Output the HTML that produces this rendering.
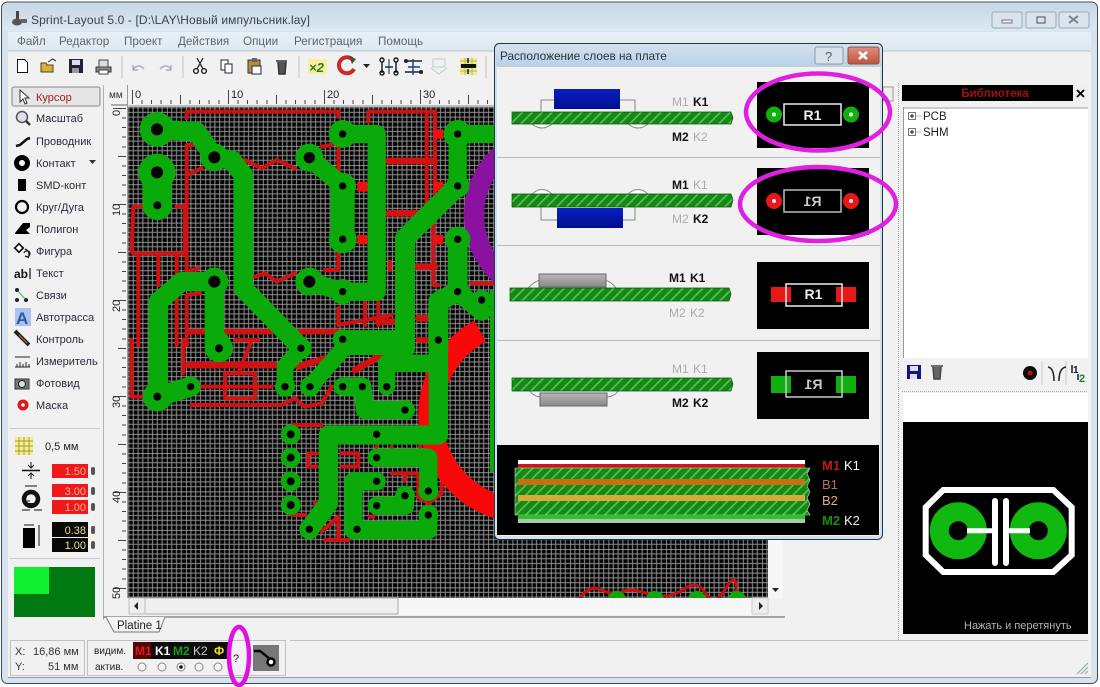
<!DOCTYPE html>
<html><head><meta charset="utf-8"><title>Sprint-Layout 5.0</title>
<style>
html,body{margin:0;padding:0;background:#fff;width:1100px;height:687px;overflow:hidden}
svg{display:block;filter:blur(.35px)}
text{font-family:"Liberation Sans","Noto Sans CJK SC",sans-serif;font-size:11px;fill:#222}
.m{fill:#5d6570;font-size:11.7px}
.t{font-size:11px;fill:#2a2a3a}
.rd{stroke:#d01212;fill:none;stroke-linecap:round;stroke-linejoin:round}
.gr{stroke:#0aaa0a;fill:none;stroke-linecap:round;stroke-linejoin:round}
.b{font-weight:bold;fill:#111;font-size:12px}
.g{fill:#aaa;font-size:12px}
</style></head><body>
<svg width="1100" height="687" viewBox="0 0 1100 687" xmlns="http://www.w3.org/2000/svg">
<defs>
<linearGradient id="tb" x1="0" y1="0" x2="0" y2="1"><stop offset="0" stop-color="#c9d7e4"/><stop offset="1" stop-color="#dce8f2"/></linearGradient>
<linearGradient id="mb" x1="0" y1="0" x2="0" y2="1"><stop offset="0" stop-color="#e8eff6"/><stop offset="1" stop-color="#dfe8f1"/></linearGradient>
<linearGradient id="dt" x1="0" y1="0" x2="0" y2="1"><stop offset="0" stop-color="#d2e1ee"/><stop offset="1" stop-color="#b9d0e4"/></linearGradient>
<linearGradient id="blue" x1="0" y1="0" x2="0" y2="1"><stop offset="0" stop-color="#0a20c0"/><stop offset="1" stop-color="#000e90"/></linearGradient>
<linearGradient id="grey" x1="0" y1="0" x2="0" y2="1"><stop offset="0" stop-color="#b8b8b8"/><stop offset="1" stop-color="#888"/></linearGradient>
<linearGradient id="cl" x1="0" y1="0" x2="0" y2="1"><stop offset="0" stop-color="#e09080"/><stop offset="1" stop-color="#c05040"/></linearGradient>
<pattern id="grid" x="128.5" y="107.5" width="19.2" height="19.2" patternUnits="userSpaceOnUse">
<rect width="19.2" height="19.2" fill="#050505"/>
<path d="M4.8 0V19.2M9.6 0V19.2M14.4 0V19.2M0 4.8H19.2M0 9.6H19.2M0 14.4H19.2" stroke="#8e8e8e" stroke-width="1"/>
<path d="M0 0V19.2M0 0H19.2" stroke="#b4b4b4" stroke-width="1.4"/>
</pattern>
<pattern id="hatch" width="7" height="7" patternUnits="userSpaceOnUse" patternTransform="rotate(-45) ">
<rect width="7" height="7" fill="#148a14"/><rect width="7" height="1.6" y="0" fill="#5cc05c"/>
</pattern>
<clipPath id="cv"><rect x="128" y="107" width="640" height="491"/></clipPath>
</defs>

<!-- window frame -->
<rect x="1.5" y="2" width="1096" height="681.5" rx="6" fill="#d6e3ef" stroke="#3a4a58"/>
<rect x="2.5" y="3" width="1094" height="28" rx="5" fill="url(#tb)"/>
<rect x="8" y="32" width="1083" height="19" fill="url(#mb)"/>
<rect x="8" y="51" width="1083" height="626" fill="#f1f1f1"/>
<path d="M8 51H1091" stroke="#b8c4ce"/>
<path d="M8 677.5H1091" stroke="#999"/>

<!-- title -->
<g fill="#444"><rect x="16" y="11" width="3" height="10"/><ellipse cx="17" cy="22" rx="5" ry="3.5" fill="#555"/><rect x="21" y="19" width="6" height="4" fill="#666"/></g>
<text x="31" y="24" font-size="12" style="font-size:12px;fill:#38424c" textLength="279">Sprint-Layout 5.0 - [D:\LAY\Новый импульсник.lay]</text>
<g fill="#d9e4ed" stroke="#9aa8b5"><rect x="992" y="12" width="30" height="16" rx="2"/><rect x="1026" y="12" width="30" height="16" rx="2"/><rect x="1059" y="12" width="30" height="16" rx="2"/></g>
<rect x="1002" y="20" width="10" height="3" fill="#eef" stroke="#778"/>
<rect x="1037" y="17" width="8" height="6" fill="none" stroke="#667" stroke-width="1.2"/>
<path d="M1069 16l9 7M1078 16l-9 7" stroke="#7a8792" stroke-width="2"/>

<!-- menu -->
<text class="m" x="17" y="45">Файл</text><text class="m" x="59" y="45">Редактор</text><text class="m" x="124" y="45">Проект</text><text class="m" x="178" y="45">Действия</text><text class="m" x="243" y="45">Опции</text><text class="m" x="294" y="45">Регистрация</text><text class="m" x="378" y="45">Помощь</text>

<!-- toolbar -->
<g>
<path d="M17.5 59.5h7l3 3v10h-10z" fill="#fff" stroke="#111"/>
<path d="M41 72v-9h5l1 2h6v7z" fill="#d8b040" stroke="#554010"/><path d="M48 62l5-3 3 2" stroke="#224" fill="none"/>
<rect x="69" y="59" width="14" height="14" fill="#223" /><rect x="72" y="60" width="8" height="5" fill="#dde"/><rect x="72" y="68" width="7" height="5" fill="#999"/>
<path d="M96 67h15v5H96z" fill="#888" stroke="#333"/><rect x="99" y="60" width="9" height="7" fill="#ddd" stroke="#444"/><rect x="99" y="70" width="9" height="4" fill="#fff" stroke="#444"/>
<path d="M122 56v22M183 56v22M299 56v22M486 56v22" stroke="#c4c4c4"/>
<path d="M133 69q6-6 11 0M133 65v5h5" stroke="#aab" fill="none" stroke-width="1.4"/>
<path d="M160 69q6-6 11 0M171 65v5h-5" stroke="#aab" fill="none" stroke-width="1.4"/>
<path d="M197 58l6 11M203 58l-6 11" stroke="#222" stroke-width="1.3"/><circle cx="196" cy="71" r="2.4" fill="none" stroke="#111" stroke-width="1.3"/><circle cx="204" cy="71" r="2.4" fill="none" stroke="#111" stroke-width="1.3"/>
<rect x="221" y="60" width="7" height="10" fill="#fff" stroke="#224"/><rect x="225" y="64" width="7" height="9" fill="#fff" stroke="#224"/>
<rect x="248" y="60" width="12" height="13" fill="#b09040" stroke="#333"/><rect x="252" y="66" width="9" height="8" fill="#fff" stroke="#223"/><rect x="252" y="58" width="5" height="4" fill="#666"/>
<path d="M276 61h11M278 62l1 12h6l1-12" fill="#555" stroke="#333" stroke-width="1.5"/>
<rect x="308" y="59" width="19" height="15" fill="#f4f0a0"/><text x="309" y="72" style="font-size:13px;font-weight:bold;font-style:italic;fill:#2c7a1c">×2</text>
<path d="M353 60a8 8 0 1 0 1 9" fill="none" stroke="#d02820" stroke-width="4"/><path d="M349 56l7 3-4 5z" fill="#4a4a30"/>
<path d="M363 64h7l-3.500 4z" fill="#222"/>
<g fill="none" stroke="#111" stroke-width="1.4"><path d="M382 62v11M396 62v11"/><circle cx="382" cy="60" r="2"/><circle cx="396" cy="60" r="2"/><circle cx="382" cy="73" r="2"/><circle cx="396" cy="73" r="2"/></g><path d="M385 67h8" stroke="#1a3a90" stroke-width="1.6"/><path d="M389 59v15" stroke="#222"/>
<path d="M405 61h17M405 72h17" stroke="#222" stroke-width="1.6"/><circle cx="406" cy="61" r="2" fill="#222"/><circle cx="421" cy="72" r="2" fill="#222"/><path d="M413 59v16M408 67h12" stroke="#1a3a90" stroke-width="1.4"/>
<g stroke="#bcc" fill="none"><rect x="433" y="59" width="12" height="8"/><path d="M431 68l8 6 8-6"/></g>
<rect x="460" y="58" width="17" height="17" fill="#f0ec90"/><path d="M460 66h17M460 61h17M460 71h17M465 58v17M472 58v17" stroke="#aaa050" stroke-width=".7"/><rect x="461" y="64" width="15" height="4" fill="#111"/><path d="M468 58v5M468 69v5" stroke="#123" stroke-width="1.6"/>
</g>

<!-- left tool panel -->
<path d="M103.5 85V620" stroke="#b0b0b0"/>
<rect x="12" y="87" width="88" height="19" rx="2" fill="#e6e6e6" stroke="#888"/>
<path d="M20 90v12l3-3 2 5 2-1-2-5h4z" fill="#fff" stroke="#333"/>
<text x="36" y="101" style="fill:#9b1c1c">Курсор</text>
<text class="t" x="36" y="122">Масштаб</text><text class="t" x="36" y="145">Проводник</text><text class="t" x="36" y="167">Контакт</text><text class="t" x="36" y="189">SMD-конт</text><text class="t" x="36" y="211">Круг/Дуга</text><text class="t" x="36" y="233">Полигон</text><text class="t" x="36" y="255">Фигура</text><text class="t" x="36" y="277">Текст</text><text class="t" x="36" y="299">Связи</text><text class="t" x="36" y="321">Автотрасса</text><text class="t" x="36" y="343">Контроль</text><text class="t" x="36" y="365">Измеритель</text><text class="t" x="36" y="387">Фотовид</text><text class="t" x="36" y="409">Маска</text>
<circle cx="22" cy="117" r="5.500" fill="#dde" stroke="#555" stroke-width="1.500"/><path d="M26 121l4 4" stroke="#333" stroke-width="2.500"/>
<path d="M16 146l4-1 7-6 3-1" stroke="#111" stroke-width="2.600" fill="none"/>
<path d="M89 160h7l-3.500 4z" fill="#333"/>
<circle cx="22" cy="163" r="5.500" fill="#fff" stroke="#000" stroke-width="5"/>
<rect x="18" y="179" width="8" height="12" fill="#000"/>
<circle cx="22" cy="207" r="6" fill="none" stroke="#000" stroke-width="2.200"/>
<path d="M15 233l8-10h7v4l-4 3 4 4h-15z" fill="#000"/>
<rect x="16" y="245" width="6" height="6" fill="#fff" stroke="#000" stroke-width="1.600" transform="rotate(45 19 248)"/><path d="M25 256a3 3 0 1 0-1-3M28 258a6 6 0 0 0-3-9" fill="none" stroke="#222" stroke-width="1.300"/>
<text x="14" y="278" style="font-weight:bold;font-size:12px;fill:#111">ab</text><path d="M30 268v11" stroke="#111" stroke-width="1.200"/>
<circle cx="17" cy="290" r="2" fill="#222"/><circle cx="17" cy="300" r="2" fill="#222"/><circle cx="26" cy="300" r="2" fill="#222"/><path d="M18 291l7 8" stroke="#50b060"/>
<rect x="15" y="308" width="16" height="18" fill="#a8c4e8"/><text x="16" y="324" style="font-size:17px;font-weight:bold;fill:#2a58a8">A</text>
<path d="M15 331l14 14" stroke="#222" stroke-width="4"/><path d="M19 335l8 8" stroke="#a85030" stroke-width="1.500"/>
<path d="M15 357h15M15 367h15M17 364v3M20 362v5M23 364v3M26 362v5M29 364v3" stroke="#222"/>
<rect x="15" y="379" width="14" height="10" fill="#777" stroke="#333"/><circle cx="22" cy="384" r="3.500" fill="#ddd" stroke="#222"/>
<circle cx="23" cy="405" r="5.500" fill="#e01818"/><circle cx="23" cy="405" r="1.800" fill="#fff"/>
<path d="M10 428.500H100M10 558.500H100" stroke="#c8c8c8"/>
<rect x="15" y="437" width="18" height="18" fill="#f2ee90"/><path d="M15 441h18M15 446h18M15 451h18M19 437v18M24 437v18M29 437v18" stroke="#a09a30" stroke-width=".9"/>
<text x="45" y="450">0,5 мм</text>
<path d="M22 470.500h18" stroke="#111" stroke-width="1.500"/><path d="M31 462v6M31 473v6M28 465l3 3 3-3M28 476l3-3 3 3" stroke="#111" fill="none"/>
<path d="M25 486h12M27 501h3M35 501h3M22 510h8M34 510h8" stroke="#111"/>
<circle cx="31" cy="499" r="7" fill="none" stroke="#111" stroke-width="4.500"/><rect x="28" y="503" width="6" height="4" fill="#111"/>
<rect x="23" y="528" width="12" height="20" fill="#000"/><path d="M24 525h10M39 525v21" stroke="#111"/>
<g font-size="11"><rect x="52" y="464" width="36" height="14" fill="#f01818"/><rect x="52" y="484" width="36" height="13" fill="#f01818"/><rect x="52" y="500" width="36" height="14" fill="#f01818"/><rect x="52" y="522" width="36" height="15" fill="#080808"/><rect x="52" y="538" width="36" height="14" fill="#080808"/></g>
<text x="86" y="475" text-anchor="end" style="fill:#ffb0a0">1.50</text><text x="86" y="495" text-anchor="end" style="fill:#ffb0a0">3.00</text><text x="86" y="511" text-anchor="end" style="fill:#ffb0a0">1.00</text><text x="86" y="534" text-anchor="end" style="fill:#e8e090">0.38</text><text x="86" y="549" text-anchor="end" style="fill:#e8e090">1.00</text>
<g fill="#555"><rect x="91" y="467" width="4" height="8" rx="2"/><rect x="91" y="487" width="4" height="8" rx="2"/><rect x="91" y="503" width="4" height="8" rx="2"/><rect x="91" y="526" width="4" height="8" rx="2"/><rect x="91" y="541" width="4" height="8" rx="2"/></g>
<rect x="14" y="567" width="81" height="50" fill="#007a10"/><rect x="14" y="567" width="35" height="27" fill="#10f030"/>

<!-- rulers -->
<rect x="104" y="85" width="680" height="22" fill="#f1f1f1"/>
<text x="109" y="98" style="font-size:10px;fill:#333">мм</text>
<path d="M111 105h17" stroke="#666"/>
<path d="M132.500 90V104M228.500 90V104M324.500 90V104M420.500 90V104M180.500 95V104M276.500 95V104M372.500 95V104M468.500 95V104M142 100V104M151.500 100V104M161 100V104M171 100V104M190 100V104M199.500 100V104M209 100V104M219 100V104M238 100V104M247.500 100V104M257 100V104M267 100V104M286 100V104M295.500 100V104M305 100V104M315 100V104M334 100V104M343.500 100V104M353 100V104M363 100V104M382 100V104M391.500 100V104M401 100V104M411 100V104M430 100V104M439.500 100V104M449 100V104M459 100V104M478 100V104M487.500 100V104" stroke="#444"/>
<text x="135" y="98">0</text><text x="231" y="98">10</text><text x="327" y="98">20</text><text x="423" y="98">30</text>
<path d="M128.500 106H772" stroke="#888"/>
<path d="M113 108.500H126M113 204.500H126M113 300.500H126M113 396.500H126M113 492.500H126M113 588.500H126" stroke="#444"/>
<path d="M118 156.500H126M118 252.500H126M118 348.500H126M118 444.500H126M118 540.500H126" stroke="#444"/>
<path d="M122 118H126M122 127.500H126M122 137H126M122 147H126M122 166H126M122 175.500H126M122 185H126M122 195H126M122 214H126M122 223.500H126M122 233H126M122 243H126M122 262H126M122 271.500H126M122 281H126M122 291H126M122 310H126M122 319.500H126M122 329H126M122 339H126M122 358H126M122 367.500H126M122 377H126M122 387H126M122 406H126M122 415.500H126M122 425H126M122 435H126M122 454H126M122 463.500H126M122 473H126M122 483H126M122 502H126M122 511.500H126M122 521H126M122 531H126M122 550H126M122 559.500H126M122 569H126M122 579H126" stroke="#444"/>
<g style="font-size:11px"><text transform="translate(120,116) rotate(-90)" style="font-size:11px">0</text><text transform="translate(120,216) rotate(-90)" style="font-size:11px">10</text><text transform="translate(120,312) rotate(-90)" style="font-size:11px">20</text><text transform="translate(120,408) rotate(-90)" style="font-size:11px">30</text><text transform="translate(120,503) rotate(-90)" style="font-size:11px">40</text><text transform="translate(120,599) rotate(-90)" style="font-size:11px">50</text></g>
<path d="M127.500 85V598" stroke="#999"/>

<!-- PCB canvas -->
<g clip-path="url(#cv)">
<rect x="128" y="107" width="640" height="491" fill="url(#grid)"/>
<circle cx="555" cy="215" r="81" fill="none" stroke="#8b12a0" stroke-width="20"/>
<path d="M480 331A96 96 0 0 0 560 505" fill="none" stroke="#f80808" stroke-width="24"/>
<rect x="490" y="290" width="7" height="182" fill="#0aaa0a"/>
<path d="M580 598q10-14 22-8t20 2 20 0 22 4 22-8 20 6 20-6 10 8" stroke="#c81010" stroke-width="3" fill="none"/>
<g fill="#0aaa0a"><circle cx="617" cy="600" r="9"/><circle cx="655" cy="600" r="9"/><circle cx="697" cy="600" r="9"/><circle cx="737" cy="600" r="9"/></g>

<g transform="translate(125,85) scale(.33333)">
<g class="rd" stroke-width="12">
<path d="M185 100V80H640V95M185 180V560L220 550M185 180H225L235 220M185 270L230 250M730 110V80H930V370M905 80V370M360 225L410 250L455 225L510 250M390 575L420 565L455 590L510 565M20 500L25 365H50M25 505H185M155 365H180V500M40 505V780M100 505V600M155 505V565M155 620V780M185 630V780M185 630L225 625M640 175V265M590 185L620 180M640 370V420M640 500V555H600M925 420V600H940M795 530V555M1040 595H1110M640 670V720L800 690M720 650V720M760 650V720"/>
<path d="M790 228H930M790 385H880M760 710H810M880 700H910M875 545H930" stroke-width="20"/>
<path d="M190 740H440M520 740H640M880 765H910" stroke-width="17"/>
</g>
<g fill="#f01010"><rect x="925" y="133" width="30" height="28"/><rect x="925" y="290" width="30" height="28"/><rect x="925" y="450" width="30" height="28"/><rect x="697" y="290" width="30" height="30"/><rect x="697" y="450" width="30" height="28"/></g>
</g>
<g transform="translate(125,340) scale(.33333)">
<g class="rd" stroke-width="12">
<path d="M20 0V170H60M175 0V100M215 140H440M200 195H470L510 175L540 200L590 190L620 140M300 100V175H390V100ZM340 100L380 0M330 0H400M505 255H590M575 340H550V380H575M650 340H700V380H650M800 400H880V470L910 490L950 460V430M840 400V420M600 600H670M590 575L640 530V600M500 525H540M735 530H745M570 490L590 480"/>
<path d="M190 75H450M520 80L650 40M690 90L780 40" stroke-width="20"/>
</g>
<g fill="#d01212"><circle cx="755" cy="320" r="6"/><circle cx="800" cy="320" r="6"/><circle cx="885" cy="320" r="6"/></g>
</g>

<!-- green copper -->
<g transform="translate(125,85) scale(.33333)">
<g class="gr">
<path d="M96 133L215 140L268 217" stroke-width="58"/>
<path d="M268 217L320 225L355 270V610L530 790" stroke-width="58"/>
<path d="M96 262L97 361" stroke-width="88"/>
<path d="M268 590H170L100 650V800" stroke-width="58"/>
<path d="M268 590V790" stroke-width="58"/>
<path d="M553 218L653 303" stroke-width="55"/>
<path d="M653 303L653 463" stroke-width="72"/>
<path d="M653 147H755V620H653" stroke-width="55"/>
<path d="M553 590L653 620" stroke-width="55"/>
<path d="M998 147H1110M998 147V303" stroke-width="55"/>
<path d="M998 303L840 460V790" stroke-width="60"/>
<path d="M653 763H840" stroke-width="55"/>
<path d="M998 463V620L940 650V790" stroke-width="60"/>
<path d="M998 620L1070 680" stroke-width="55"/>
</g>
<g fill="#0aaa0a"><circle cx="96" cy="133" r="52"/><circle cx="268" cy="217" r="42"/><circle cx="96" cy="262" r="56"/><circle cx="97" cy="361" r="44"/><circle cx="268" cy="590" r="42"/><circle cx="553" cy="218" r="42"/><circle cx="653" cy="147" r="42"/><circle cx="653" cy="303" r="40"/><circle cx="653" cy="463" r="42"/><circle cx="553" cy="590" r="42"/><circle cx="653" cy="620" r="38"/><circle cx="998" cy="147" r="42"/><circle cx="998" cy="303" r="35"/><circle cx="998" cy="463" r="38"/><circle cx="998" cy="620" r="35"/><circle cx="1070" cy="645" r="30"/><circle cx="653" cy="763" r="30"/></g>
</g>
<g transform="translate(125,340) scale(.33333)">
<g class="gr">
<path d="M100 0V170" stroke-width="58"/>
<path d="M97 170L197 140" stroke-width="60"/>
<path d="M282 0V25" stroke-width="58"/>
<path d="M528 25L480 80V140" stroke-width="50"/>
<path d="M555 140L660 20H840" stroke-width="50"/>
<path d="M653 140H712L720 210H840" stroke-width="55"/>
<path d="M940 0V285H610V490L553 568" stroke-width="58"/>
<path d="M785 70H940M785 70V140" stroke-width="52"/>
<path d="M755 353H910V453" stroke-width="55"/>
<path d="M755 424H685V570H910V525" stroke-width="55"/>
<path d="M755 497H840V467" stroke-width="55"/>
</g>
<g fill="#0aaa0a"><circle cx="97" cy="170" r="44"/><circle cx="197" cy="140" r="30"/><circle cx="282" cy="25" r="42"/><circle cx="480" cy="140" r="30"/><circle cx="555" cy="140" r="30"/><circle cx="528" cy="25" r="32"/><circle cx="553" cy="568" r="30"/><circle cx="497" cy="283" r="30"/><circle cx="497" cy="353" r="30"/><circle cx="497" cy="424" r="30"/><circle cx="497" cy="495" r="30"/><circle cx="910" cy="453" r="30"/><circle cx="910" cy="525" r="30"/><circle cx="840" cy="467" r="30"/><circle cx="840" cy="210" r="30"/></g>
<g fill="#000"><circle cx="97" cy="170" r="12"/><circle cx="197" cy="140" r="11"/><circle cx="282" cy="25" r="12"/><circle cx="528" cy="25" r="11"/><circle cx="480" cy="140" r="11"/><circle cx="555" cy="140" r="11"/><circle cx="653" cy="140" r="11"/><circle cx="712" cy="140" r="11"/><circle cx="785" cy="140" r="11"/><circle cx="840" cy="210" r="11"/><circle cx="497" cy="283" r="12"/><circle cx="497" cy="353" r="12"/><circle cx="497" cy="424" r="12"/><circle cx="497" cy="495" r="12"/><circle cx="755" cy="283" r="11"/><circle cx="755" cy="353" r="11"/><circle cx="755" cy="424" r="11"/><circle cx="755" cy="497" r="11"/><circle cx="910" cy="453" r="11"/><circle cx="840" cy="467" r="11"/><circle cx="910" cy="525" r="11"/><circle cx="696" cy="568" r="11"/><circle cx="553" cy="568" r="11"/><circle cx="940" cy="0" r="11"/></g>
</g>
<g transform="translate(125,85) scale(.33333)" fill="#000"><circle cx="96" cy="133" r="18"/><circle cx="268" cy="217" r="18"/><circle cx="96" cy="262" r="18"/><circle cx="97" cy="361" r="12"/><circle cx="268" cy="590" r="18"/><circle cx="553" cy="218" r="17"/><circle cx="653" cy="147" r="11"/><circle cx="653" cy="303" r="11"/><circle cx="653" cy="463" r="11"/><circle cx="553" cy="590" r="18"/><circle cx="653" cy="620" r="11"/><circle cx="998" cy="147" r="11"/><circle cx="998" cy="303" r="11"/><circle cx="998" cy="463" r="11"/><circle cx="998" cy="620" r="11"/><circle cx="1070" cy="645" r="11"/><circle cx="653" cy="763" r="11"/></g>
</g>

<!-- scrollbars -->
<rect x="128" y="598" width="640" height="17" fill="#f7f7f7"/>
<rect x="145" y="598" width="253" height="16" fill="#efefef" stroke="#aaa"/>
<rect x="129" y="598" width="16" height="16" fill="#eee" stroke="#bbb"/>
<path d="M134 606l4-4v8z" fill="#222"/>
<rect x="752" y="598" width="16" height="16" fill="#eee" stroke="#ccc"/>
<path d="M763 606l-4-4v8z" fill="#222"/>
<rect x="768" y="107" width="15" height="491" fill="#f7f7f7"/>
<path d="M772 588h7l-3.500 4z" fill="#222"/>
<path d="M104 617H785" stroke="#8c8c8c" stroke-width="1.500"/>
<path d="M103 617l3 0 8 15h45l6-15" fill="#f4f4f4" stroke="#777"/>
<text x="117" y="629" style="font-size:11.500px">Platine 1</text>

<!-- status bar -->
<g fill="none" stroke="#c0c0c0"><rect x="10.500" y="640.500" width="74" height="35"/><rect x="87.500" y="640.500" width="198" height="35"/><path d="M290 640.500H1088"/></g>
<text x="15" y="655" style="fill:#333">X:</text><text x="15" y="670" style="fill:#333">Y:</text><text x="33" y="655" style="fill:#333">16,86 мм</text><text x="48" y="670" style="fill:#333">51 мм</text>
<text x="94" y="654" style="font-size:10px">видим.</text><text x="95" y="670" style="font-size:10px">актив.</text>
<rect x="133" y="642" width="95" height="17" fill="#0c0c0c"/><rect x="133" y="642" width="18" height="17" fill="#500a0a"/>
<text x="135" y="655" style="font-weight:bold;font-size:12px;fill:#e01818">M1</text><text x="155" y="655" style="font-weight:bold;font-size:12px;fill:#fff">K1</text><text x="173" y="655" style="font-weight:bold;font-size:12px;fill:#10a020">M2</text><text x="193" y="655" style="font-size:12px;fill:#ccc">K2</text><text x="214" y="655" style="font-weight:bold;font-size:12px;fill:#f0e020">Ф</text>
<g fill="#f4f4f4" stroke="#888"><circle cx="142" cy="667" r="4"/><circle cx="162" cy="667" r="4"/><circle cx="181" cy="667" r="4"/><circle cx="199" cy="667" r="4"/><circle cx="218" cy="667" r="4"/></g><circle cx="181" cy="667" r="1.800" fill="#111"/>
<text x="233" y="662" style="font-size:11px">?</text>
<rect x="253" y="645" width="26" height="26" fill="#777"/>
<path d="M254 651h6l10 8" stroke="#000" stroke-width="2.400" fill="none"/><circle cx="271" cy="662" r="3.500" fill="#fff" stroke="#000" stroke-width="2.400"/>
<ellipse cx="239" cy="656" rx="10" ry="29" fill="none" stroke="#e010e0" stroke-width="4.500"/>

<!-- right panel -->
<path d="M898.500 83V640" stroke="#aaa" stroke-dasharray="1 1"/>
<rect x="883" y="87" width="10" height="14" fill="#eee" stroke="#999"/>
<rect x="902" y="85" width="171" height="16" fill="#000"/>
<text x="995" y="97" text-anchor="middle" style="fill:#a01018;font-weight:bold;font-size:11.500px">Библиотека</text>
<rect x="1073" y="85" width="15" height="16" fill="#efefef"/><path d="M1077 90l7 7M1084 90l-7 7" stroke="#000" stroke-width="1.800"/>
<rect x="903" y="107" width="185" height="251" fill="#fff"/><path d="M903 108H1088M903.500 107V358" stroke="#999"/>
<rect x="908.500" y="112.500" width="7" height="7" fill="#fff" stroke="#777"/><path d="M910 116h4M912 114v4" stroke="#111"/><rect x="908.500" y="128.500" width="7" height="7" fill="#fff" stroke="#777"/><path d="M910 132h4M912 130v4" stroke="#111"/><path d="M916 116h5M916 132h5" stroke="#bbb"/>
<text x="923" y="120" style="font-size:11.500px">PCB</text><text x="923" y="136" style="font-size:11.500px">SHM</text>
<rect x="907" y="365" width="14" height="14" fill="#14147a"/><rect x="910" y="366" width="8" height="5" fill="#dde"/><rect x="910" y="374" width="7" height="5" fill="#dde"/>
<path d="M931 366h12M933 367l1 12h6l1-12" fill="#666" stroke="#444" stroke-width="1.500"/>
<circle cx="1030" cy="373" r="7" fill="#0c0c0c"/><circle cx="1030" cy="373" r="2.500" fill="#c01010"/>
<path d="M1042 361V385M1066 361V385" stroke="#ccc"/><path d="M1048 367q6 1 6 14M1066 367q-7 1-7 14" stroke="#222" fill="none" stroke-width="1.500"/>
<path d="M1072 365v8M1078 380v-6" stroke="#123" stroke-width="1.500"/><text x="1079" y="382" style="font-size:11px;font-weight:bold;fill:#208020">2</text><text x="1073" y="373" style="font-size:10px;font-weight:bold;fill:#113">1</text>
<path d="M902 391.500H1088" stroke="#aaa" stroke-dasharray="1 1"/>
<rect x="903" y="393" width="185" height="29" fill="#fff"/>
<rect x="903" y="422" width="185" height="212" fill="#000"/>
<polygon points="943.300,490 1053.300,490 1071.700,507.300 1071.700,555 1053.300,572 943.300,572 925.700,555 925.700,507.300" fill="none" stroke="#fff" stroke-width="6"/>
<circle cx="958.300" cy="530.700" r="19" fill="none" stroke="#10b810" stroke-width="19"/>
<circle cx="1038.300" cy="530.700" r="19" fill="none" stroke="#10b810" stroke-width="19"/>
<path d="M967 530.700h25M1009 530.700h21" stroke="#fff" stroke-width="5"/>
<path d="M995 501v62M1006 501v62" stroke="#fff" stroke-width="6" stroke-linecap="round"/>
<text x="964" y="629" style="fill:#b4b4b4;font-size:11px">Нажать и перетянуть</text>
<path d="M1077 674l11-11M1081 674l7-7M1085 674l3-3" stroke="#9aa" stroke-width="1.200"/>

<!-- dialog -->
<rect x="494.500" y="43.500" width="388" height="496" rx="5" fill="#cfe0ee" stroke="#24343f"/>
<rect x="495.500" y="44.500" width="386" height="23" rx="4" fill="url(#dt)"/>
<text x="500" y="60" style="font-size:11.800px;fill:#2a323c">Расположение слоев на плате</text>
<rect x="815" y="47" width="28" height="17" rx="2" fill="#d8e2ea" stroke="#8899a8"/><text x="825" y="61" style="font-size:13px;fill:#556">?</text>
<rect x="848" y="47" width="31" height="17" rx="2" fill="url(#cl)" stroke="#8c5048"/><path d="M859 52l8 7M867 52l-8 7" stroke="#fff" stroke-width="2.600"/>
<rect x="497" y="67" width="383" height="469" fill="#f1f1f1"/>
<path d="M497 157.500H880M497 245.500H880M497 340.500H880" stroke="#b8bcc0"/>

<!-- row 1 -->
<path d="M541 112V100H554M620 100H635V112" fill="none" stroke="#888"/>
<path d="M532 124q10 8 20 0M628 124q10 8 20 0" fill="#fff" stroke="#888"/>
<rect x="554" y="89" width="66" height="20" fill="url(#blue)"/>
<polygon points="512,112 731,112 733,118 731,124 512,124" fill="url(#hatch)" stroke="#0a500a" stroke-width=".7"/>
<text class="g" x="672" y="106">M1</text><text class="b" x="693" y="106">K1</text>
<text class="b" x="672" y="141">M2</text><text class="g" x="693" y="141">K2</text>
<rect x="757" y="82" width="112" height="66" fill="#000"/>
<rect x="784" y="104" width="57" height="21" fill="none" stroke="#eee" stroke-width="1.500"/>
<text x="812.500" y="120" text-anchor="middle" style="font-size:14px;font-weight:bold;fill:#eee">R1</text>
<circle cx="774" cy="114.500" r="8" fill="#10b010"/><circle cx="851" cy="114.500" r="8" fill="#10b010"/><circle cx="774" cy="114.500" r="2" fill="#e8ffe8"/><circle cx="851" cy="114.500" r="2" fill="#e8ffe8"/>
<ellipse cx="818" cy="112" rx="72" ry="38.500" fill="none" stroke="#e020e0" stroke-width="4.500"/>

<!-- row 2 -->
<path d="M532 194q10-9 20 0M628 194q10-9 20 0" fill="#fff" stroke="#888"/>
<path d="M541 207V220H557M623 220H635V207" fill="none" stroke="#888"/>
<rect x="557" y="208" width="66" height="20" fill="url(#blue)"/>
<polygon points="512,194 731,194 733,200 731,207 512,207" fill="url(#hatch)" stroke="#0a500a" stroke-width=".7"/>
<text class="b" x="672" y="189">M1</text><text class="g" x="693" y="189">K1</text>
<text class="g" x="672" y="223">M2</text><text class="b" x="693" y="223">K2</text>
<rect x="757" y="168" width="112" height="67" fill="#000"/>
<rect x="784" y="190" width="57" height="22" fill="none" stroke="#bbb" stroke-width="1.500"/>
<text transform="translate(812.500,206) scale(-1,1)" text-anchor="middle" style="font-size:14px;font-weight:bold;fill:#ccc">R1</text>
<circle cx="774" cy="201" r="8" fill="#e81818"/><circle cx="851" cy="201" r="8" fill="#e81818"/><circle cx="774" cy="201" r="2" fill="#ffe8e8"/><circle cx="851" cy="201" r="2" fill="#ffe8e8"/>
<ellipse cx="818" cy="204" rx="78" ry="37" fill="none" stroke="#e020e0" stroke-width="4.500"/>

<!-- row 3 -->
<path d="M528 288q8-8 14-8M602 280q8 0 14 8" fill="#fff" stroke="#888"/>
<rect x="539" y="274" width="67" height="13" fill="url(#grey)" stroke="#666"/>
<polygon points="510,288 729,288 731,294 729,301 510,301" fill="url(#hatch)" stroke="#0a500a" stroke-width=".7"/>
<text class="b" x="669" y="282">M1</text><text class="b" x="690" y="282">K1</text>
<text class="g" x="669" y="317">M2</text><text class="g" x="690" y="317">K2</text>
<rect x="757" y="262" width="112" height="67" fill="#000"/>
<rect x="771" y="287" width="20" height="15" fill="#e81818"/><rect x="836" y="287" width="20" height="15" fill="#e81818"/>
<rect x="786" y="284" width="56" height="22" fill="none" stroke="#eee" stroke-width="1.500"/>
<text x="813.500" y="299" text-anchor="middle" style="font-size:14px;font-weight:bold;fill:#eee">R1</text>

<!-- row 4 -->
<path d="M530 391q4 6 12 6M606 397q8 0 12-6" fill="#fff" stroke="#888"/>
<rect x="540" y="393" width="67" height="13" fill="url(#grey)" stroke="#666"/>
<polygon points="512,378 731,378 733,384 731,391 512,391" fill="url(#hatch)" stroke="#0a500a" stroke-width=".7"/>
<text class="g" x="672" y="373">M1</text><text class="g" x="693" y="373">K1</text>
<text class="b" x="672" y="407">M2</text><text class="b" x="693" y="407">K2</text>
<rect x="757" y="352" width="112" height="67" fill="#000"/>
<rect x="771" y="376" width="20" height="17" fill="#10b010"/><rect x="836" y="376" width="20" height="17" fill="#10b010"/>
<rect x="786" y="371" width="56" height="26" fill="none" stroke="#ccc" stroke-width="1.500"/>
<text transform="translate(813.500,389) scale(-1,1)" text-anchor="middle" style="font-size:14px;font-weight:bold;fill:#ccc">R1</text>

<!-- layers panel -->
<rect x="497" y="445" width="382" height="90" fill="#000"/>
<rect x="518" y="460" width="287" height="4" fill="#fff"/>
<rect x="518" y="464" width="287" height="4" fill="#c81818"/>
<polygon points="515,468 810,468 807,474 810,480 807,486 810,492 807,498 810,504 807,510 810,515 515,515" fill="url(#hatch)" stroke="#c8e8c8" stroke-width=".6"/>
<rect x="518" y="479" width="287" height="6" fill="#c87010"/>
<rect x="518" y="495" width="287" height="6" fill="#d8a838"/>
<rect x="518" y="515" width="287" height="4" fill="#30c030"/>
<rect x="518" y="519" width="287" height="4" fill="#a8c8a8"/>
<text x="822" y="470" style="font-size:13px;fill:#c01818;font-weight:bold">M1</text><text x="844" y="470" style="font-size:13px;fill:#fff">K1</text>
<text x="822" y="489" style="font-size:13px;fill:#b87060">B1</text>
<text x="822" y="505" style="font-size:13px;fill:#e0b080">B2</text>
<text x="822" y="525" style="font-size:13px;fill:#189018;font-weight:bold">M2</text><text x="844" y="525" style="font-size:13px;fill:#eee">K2</text>
</svg>
</body></html>
